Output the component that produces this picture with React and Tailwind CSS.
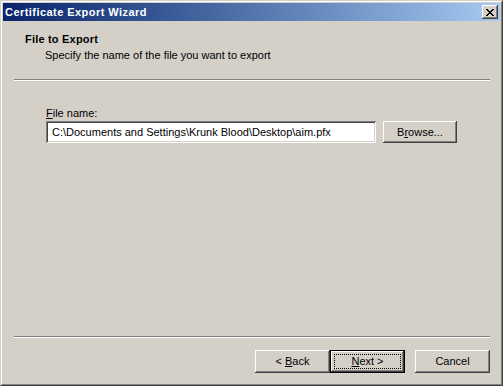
import React from 'react';

const raised =
  'shadow-[inset_-1px_-1px_#404040,inset_1px_1px_#ffffff,inset_-2px_-2px_#808080,inset_2px_2px_#d4d0c8]';

const Button = ({ children, isDefault }) => (
  <button
    className={`h-[23px] w-[75px] bg-[#d4d0c8] text-[11px] text-black leading-[13px] flex items-center justify-center ${
      isDefault ? 'border border-black' : raised
    }`}
  >
    {isDefault ? (
      <span className={`w-full h-full flex items-center justify-center ${raised}`}>
        <span className="w-[67px] h-[15px] flex items-center justify-center border border-dotted border-black">
          {children}
        </span>
      </span>
    ) : (
      children
    )}
  </button>
);

const Separator = ({ className = '' }) => (
  <div className={`h-[2px] border-t border-t-[#808080] border-b border-b-white ${className}`} />
);

const App = () => {
  return (
    <div
      className="w-[503px] h-[386px] bg-[#d4d0c8] border border-t-[#d4d0c8] border-l-[#d4d0c8] border-r-[#404040] border-b-[#404040] flex flex-col text-black"
      style={{ fontFamily: '"Liberation Sans", Arial, sans-serif' }}
    >
      <div className="flex-1 flex flex-col border border-t-white border-l-white border-r-[#808080] border-b-[#808080] p-px">
        {/* Title bar */}
        <div className="h-[18px] flex items-center justify-between pl-[2px] pr-[2px] bg-gradient-to-r from-[#0a246a] to-[#a6caf0]">
          <span className="text-[11px] font-bold text-white leading-[13px] tracking-[0.45px]">Certificate Export Wizard</span>
          <div className={`w-[16px] h-[14px] bg-[#d4d0c8] flex items-center justify-center ${raised}`}>
            <svg width="8" height="7" viewBox="0 0 8 7" shapeRendering="crispEdges">
              <path d="M0 0h2v1h-2z M6 0h2v1h-2z M1 1h2v1h-2z M5 1h2v1h-2z M2 2h4v1h-4z M3 3h2v1h-2z M2 4h4v1h-4z M1 5h2v1h-2z M5 5h2v1h-2z M0 6h2v1h-2z M6 6h2v1h-2z" fill="#000" />
            </svg>
          </div>
        </div>

        {/* Header */}
        <div className="pt-[12px] pl-[22px] text-[11px] leading-[13px]">
          <div className="font-bold tracking-[0.2px]">File to Export</div>
          <div className="mt-[3px] pl-[20px]">Specify the name of the file you want to export</div>
        </div>
        <Separator className="mt-[17px] ml-[11px] mr-[10px]" />

        {/* Content */}
        <div className="mt-[26px] pl-[43px] text-[11px] leading-[13px]">
          <div>
            <span className="underline">F</span>ile name:
          </div>
          <div className="mt-px flex items-center gap-[7px]">
            <div className="w-[330px] h-[22px] bg-white flex items-center pl-[6px] shadow-[inset_1px_1px_#808080,inset_-1px_-1px_#ffffff,inset_2px_2px_#404040,inset_-2px_-2px_#d4d0c8]">
              C:\Documents and Settings\Krunk Blood\Desktop\aim.pfx
            </div>
            <button className={`w-[74px] h-[22px] bg-[#d4d0c8] text-[11px] flex items-center justify-center ${raised}`}>
              B<span className="underline">r</span>owse...
            </button>
          </div>
        </div>

        <div className="flex-1" />

        {/* Footer */}
        <Separator className="ml-[11px] mr-[10px]" />
        <div className="mt-[12px] mb-[10px] pr-[10px] flex justify-end">
          <Button>
            &lt; <span className="underline ml-[3px]">B</span>ack
          </Button>
          <Button isDefault>
            <span className="underline">N</span>ext &gt;
          </Button>
          <div className="ml-[10px]">
            <Button>Cancel</Button>
          </div>
        </div>
      </div>
    </div>
  );
};

export default App;
